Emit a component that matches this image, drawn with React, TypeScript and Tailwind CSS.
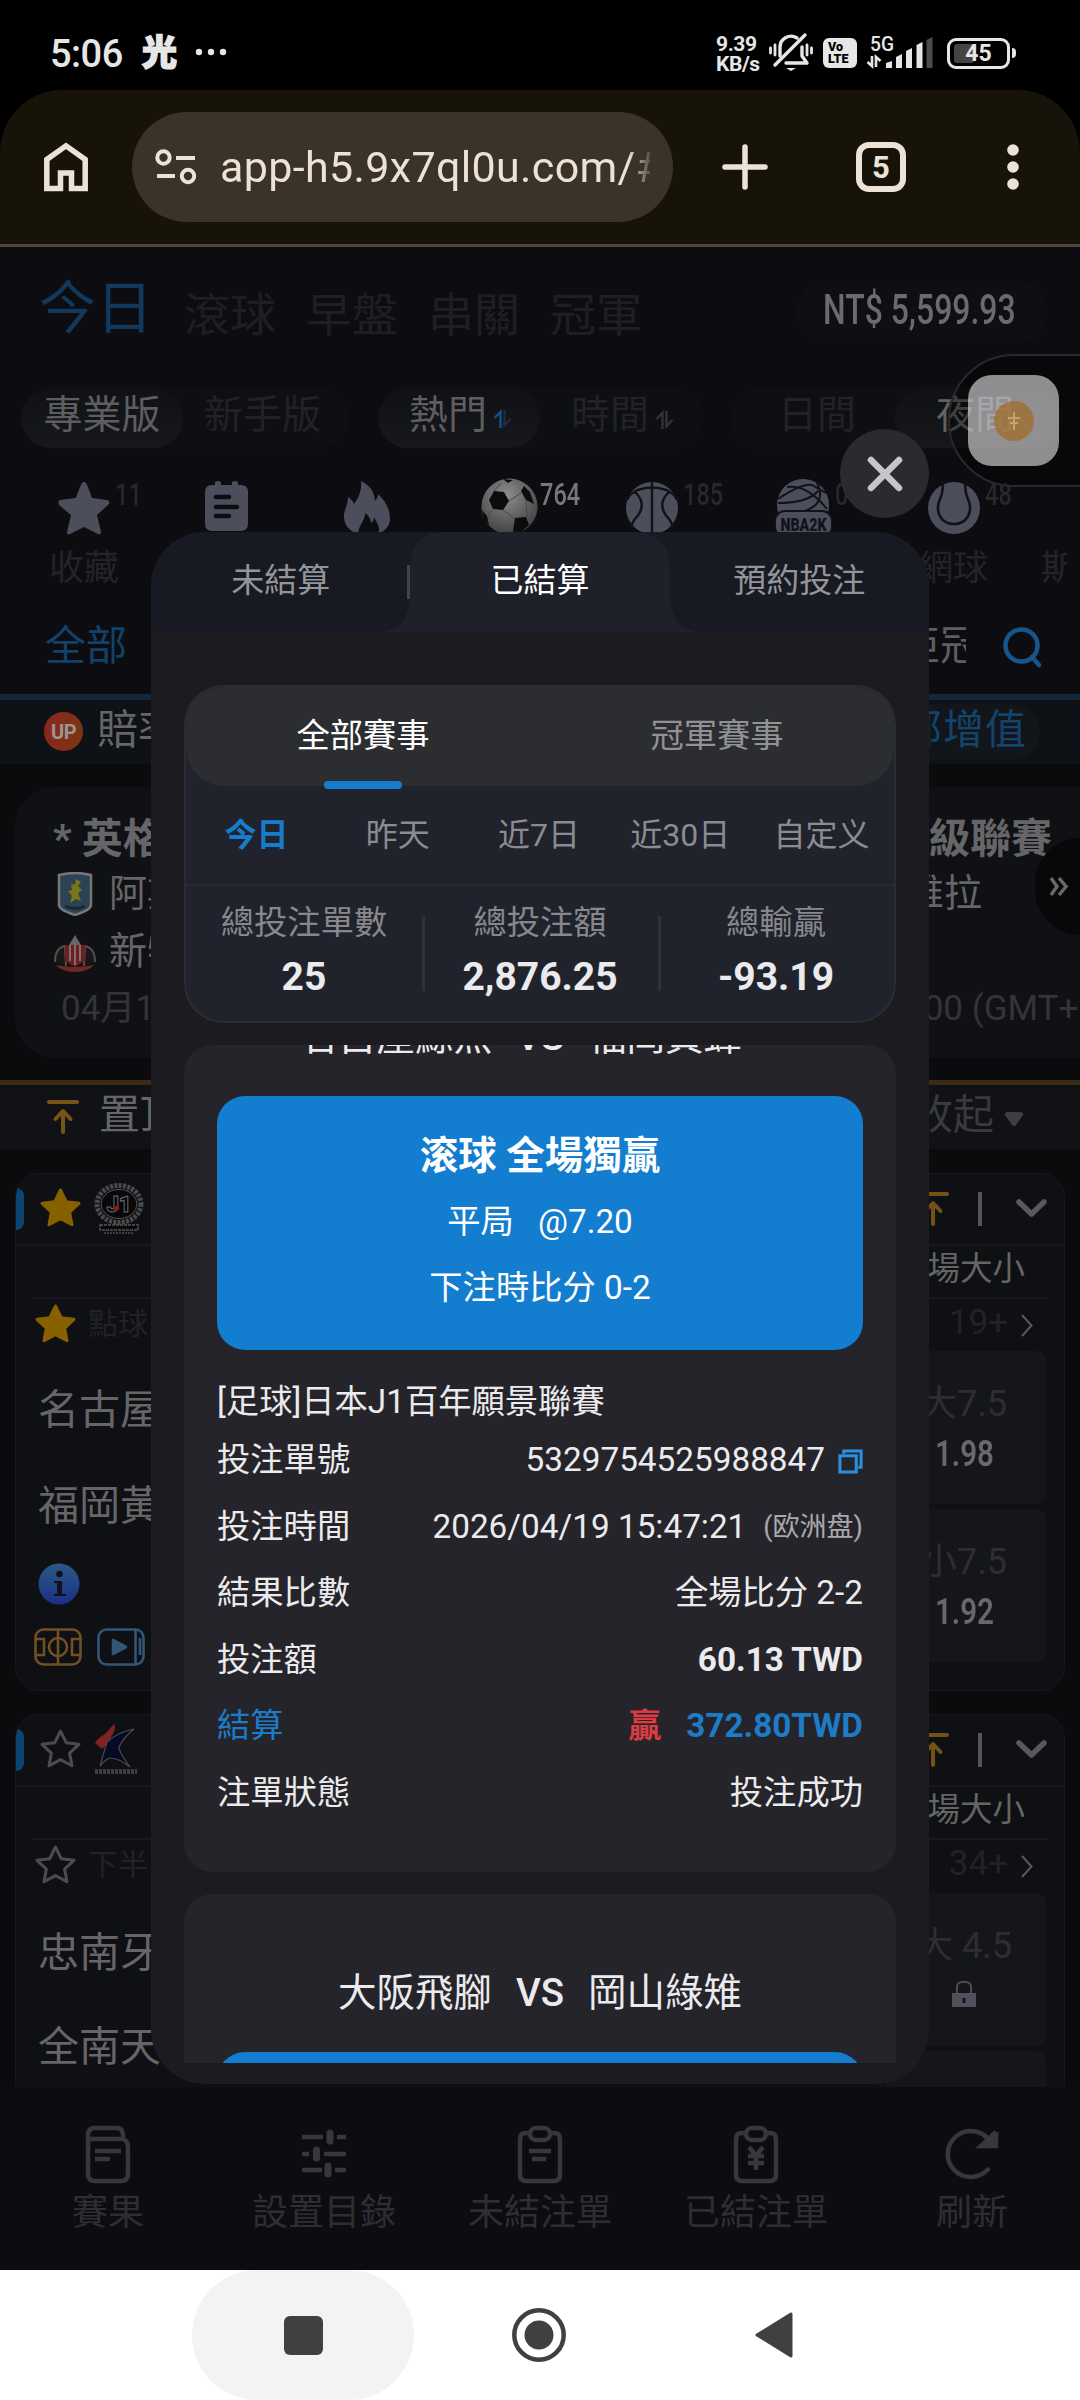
import { ReactNode } from "react";
import clsx from "clsx";

const statusRows = [
  { label: "結果比數", value: "全場比分 2-2" },
  { label: "投注額", value: "60.13 TWD", bold: true },
];

const dateTabs = ["今日", "昨天", "近7日", "近30日", "自定义"];

const totals = [
  { label: "總投注單數", value: "25" },
  { label: "總投注額", value: "2,876.25" },
  { label: "總輸贏", value: "-93.19" },
];

// condensed numerals used for money, odds and counters
function Narrow({ children, className }: { children: ReactNode; className?: string }) {
  return <span className={clsx("inline-block origin-left scale-x-[0.76] whitespace-nowrap", className)}>{children}</span>;
}

function StatusBar() {
  return (
    <div className="flex h-[90px] items-center bg-black pt-[18px] pl-[50px] text-[#e6e6e6]">
      <span className="w-[92px] text-[38px] leading-none font-medium tracking-[-0.5px]">5:06</span>
      <span className="w-[53px] pb-[2px] text-[35px] leading-none font-black [-webkit-text-stroke:1.5px_#e6e6e6]">光</span>
      <svg className="-mt-1 shrink-0" width="32" height="8" viewBox="0 0 32 8" fill="currentColor">
        <circle cx="4" cy="4" r="3.2" /><circle cx="16" cy="4" r="3.2" /><circle cx="28" cy="4" r="3.2" />
      </svg>
      <div className="ml-[489px] w-[52px] text-[21px] leading-[20px] font-bold tracking-[-0.4px]">
        <div>9.39</div>
        <div>KB/s</div>
      </div>
      <svg className="-mt-1 shrink-0" width="46" height="40" viewBox="0 0 46 40" fill="none" stroke="currentColor" strokeWidth="3.4" strokeLinecap="round">
        <path d="M12 24V15a11 11 0 0 1 17-9M34 15v9l5 7H18" strokeLinejoin="round" />
        <path d="M37 3 7 33" />
        <path d="M18 36h10l-5 3z" fill="currentColor" stroke="none" />
        <path d="M7 13v10M2.5 16v5M39 13v10M43.5 16v5" strokeWidth="2.8" />
      </svg>
      <div className="-mt-0.5 ml-[9px] h-[30px] w-[34px] rounded-[6px] bg-[#e6e6e6] pt-[3px] pl-[5px] text-[12.5px] leading-[12px] font-black text-black">
        <div>Vo</div>
        <div>LTE</div>
      </div>
      <svg className="-mt-1 ml-[9px] shrink-0" width="68" height="36" viewBox="0 0 68 36">
        <text x="4" y="17" fontSize="20" fontWeight="500" fill="#e6e6e6" textLength="24" lengthAdjust="spacingAndGlyphs">5G</text>
        <path d="M6 22v10l-4.5-4M10 33V23l4.5 4" fill="none" stroke="#e6e6e6" strokeWidth="2.6" />
        <g fill="#e6e6e6">
          <path d="M20 29l6-2v7h-6z" /><path d="M30 23l6-3v14h-6z" /><path d="M40 17l6-3v20h-6z" /><path d="M50.5 11l6-3v26h-6z" />
        </g>
        <path d="M60.5 6l6-3v31h-6z" fill="#4b4b4b" />
      </svg>
      <div className="-mt-0.5 ml-[13px] flex items-center">
        <div className="relative flex h-[31px] w-[63px] items-center justify-center rounded-[9px] border-[3px] border-[#e6e6e6]">
          <div className="absolute top-[3px] left-[4px] h-[19px] w-[20px] rounded-[3px] bg-[#444]" />
          <span className="relative text-[23px] leading-none font-bold">45</span>
        </div>
        <div className="ml-[2px] h-[10px] w-[4px] rounded-r bg-[#e6e6e6]" />
      </div>
    </div>
  );
}

function BrowserBar() {
  return (
    <div className="h-[157px] bg-black">
      <div className="flex h-[157px] items-center rounded-t-[62px] border-b-[3px] border-[#4b4740] bg-[#171309] text-[#ece3d6]">
        <svg className="ml-[44px] shrink-0" width="44" height="50" viewBox="0 0 44 50" fill="none" stroke="currentColor" strokeWidth="5.5">
          <path d="M2.8 46.5V17.5L22 3.8l19.2 13.7v29H27.5V31h-11v15.5z" />
        </svg>
        <div className="ml-[44px] flex h-[110px] w-[541px] items-center rounded-full bg-[#3b3328] pl-[23px]">
          <svg className="shrink-0" width="42" height="36" viewBox="0 0 42 36" fill="none" stroke="currentColor" strokeWidth="4">
            <circle cx="8.5" cy="8.5" r="6.2" /><path d="M21 9h19M2 27h18" /><circle cx="33" cy="27" r="6.2" />
          </svg>
          <div className="ml-[23px] w-[430px] overflow-hidden text-[43px] leading-[58px] tracking-[0.35px] whitespace-nowrap [mask-image:linear-gradient(to_right,black_95%,transparent_101%)]">app-h5.9x7ql0u.com/#</div>
        </div>
        <svg className="ml-[49px] shrink-0" width="46" height="46" viewBox="0 0 46 46" stroke="currentColor" strokeWidth="5.5" strokeLinecap="round">
          <path d="M23 3v40M3 23h40" />
        </svg>
        <div className="ml-[88px] flex h-[50px] w-[50px] items-center justify-center rounded-[13px] border-[6px] text-[31px] leading-none font-bold">5</div>
        <svg className="ml-[101px] shrink-0" width="12" height="48" viewBox="0 0 12 48" fill="currentColor">
          <circle cx="6" cy="7" r="5.8" /><circle cx="6" cy="24" r="5.8" /><circle cx="6" cy="41" r="5.8" />
        </svg>
      </div>
    </div>
  );
}

function SortArrows({ up, down }: { up: string; down: string }) {
  return (
    <svg width="19" height="20" viewBox="0 0 19 20" fill="none" strokeWidth="2.4">
      <path d="M7.5 19V3L1.5 9" stroke={up} />
      <path d="M11.5 1v15l6-6" stroke={down} />
    </svg>
  );
}

function Star({ filled }: { filled?: boolean }) {
  return (
    <svg className="shrink-0" width="43" height="41" viewBox="0 0 43 41">
      <path
        d="M21.500 3l5.700 11.700 12.800 1.600-9.400 8.800 2.400 12.700-11.500-6.200-11.500 6.200 2.400-12.700-9.400-8.800 12.800-1.600z"
        fill={filled ? "#876100" : "none"}
        stroke={filled ? "#876100" : "#4c4c4f"}
        strokeWidth="3"
        strokeLinejoin="round"
      />
    </svg>
  );
}

function SportIcons() {
  return (
    <div className="flex h-[57px] items-start pt-[2px] pl-[58px] text-[31px] leading-[28px] font-medium text-[#28282c]">
      <div className="flex w-[147px] shrink-0">
        <svg width="52" height="54" viewBox="0 0 52 54" fill="#4c4e5b">
          <path d="M26 1c2 0 3 2 8 16l15 2c3 1 3 3 1 5L39 34l4 17c0 2-1 3-3 2l-14-7-14 7c-2 1-3 0-3-2l4-17L1 24c-1-2-1-4 1-5l16-2C23 3 24 1 26 1z" />
        </svg>
        <Narrow className="ml-[5px]">11</Narrow>
      </div>
      <div className="w-[139px] shrink-0">
        <svg width="43" height="50" viewBox="0 0 43 50">
          <path d="M7 4h3V2q0-2 3-2t3 2v2h11V2q0-2 3-2t3 2v2h3q7 0 7 7v31q0 8-7 8H7q-7 0-7-8V11q0-7 7-7z" fill="#4c4e5b" />
          <path d="M11 16h13M11 26h21M11 35h13" stroke="#0d0d11" strokeWidth="4.5" strokeLinecap="round" />
        </svg>
      </div>
      <div className="w-[137px] shrink-0">
        <svg width="47" height="54" viewBox="0 0 47 54" fill="#4c4e5b">
          <path d="M17 0c9 4 14 12 14 20 2-2 3-5 3-7 8 7 12 16 12 25 0 7-5 12-12 15 3-6-1-11-4-17 0 3-1 5-3 6 0-5-4-9-6-10 1 6-6 11-7 21C5 50 0 44 0 35c0-7 4-10 4-19 3 2 5 4 6 7 5-7 8-14 7-23z" />
        </svg>
      </div>
      <div className="flex w-[145px] shrink-0 text-[#78787a]">
        <svg className="-mt-[3px]" width="57" height="57" viewBox="0 0 57 57">
          <defs>
            <radialGradient id="ball" cx="0.45" cy="0.3" r="0.75">
              <stop offset="0" stopColor="#8d8d8d" /><stop offset="1" stopColor="#3c3c3c" />
            </radialGradient>
          </defs>
          <circle cx="28.5" cy="28.5" r="28" fill="url(#ball)" />
          <path d="M13 13l10 1 5 9-6 9-10-1-4-9zM43 8l6 6 4 12-8-4-5-9zM34 40l11-1 3 8-8 7h-8zM1 32l5 6 2 9-5-6zM22 1l10 1-5 3z" fill="#0c0c0d" />
          <path d="M28 23l12-8M22 32l12 9M45 22l1 17M12 31l-5 6M13 13l7-8" stroke="#474747" strokeWidth="1" />
        </svg>
        <Narrow className="ml-[2px]">764</Narrow>
      </div>
      <div className="flex w-[149px] shrink-0">
        <svg width="52" height="54" viewBox="0 0 52 54">
          <circle cx="26" cy="27" r="26" fill="#4c4e5b" />
          <path d="M26 0v54M7 11q19-9 38 0M1 19q4-9 9-7 12 12-1 26Q4 45 7 46M51 19q-4-9-9-7-12 12 1 26 5 7 2 8" stroke="#11121a" strokeWidth="2.4" fill="none" />
        </svg>
        <Narrow className="ml-[5px]">185</Narrow>
      </div>
      <div className="flex w-[153px] shrink-0">
        <svg className="-mt-[3px]" width="57" height="57" viewBox="0 0 57 57">
          <circle cx="28" cy="27" r="26" fill="#4c4e5b" />
          <path d="M3 21q24-16 34-14l14 8M3 25q30 0 40-12M12 9q20-3 40 22M42 5q10 20-12 28" stroke="#11121a" strokeWidth="2" fill="none" />
          <rect x="0" y="33" width="57" height="26" rx="10" fill="#4c4e5b" stroke="#11121a" strokeWidth="2" />
          <text x="28.5" y="53" textAnchor="middle" fontSize="18" fontWeight="900" fill="#11121a" textLength="46" lengthAdjust="spacingAndGlyphs">NBA2K</text>
        </svg>
        <Narrow className="ml-[3px]">0</Narrow>
      </div>
      <div className="flex shrink-0">
        <svg width="52" height="54" viewBox="0 0 52 54">
          <circle cx="26" cy="27" r="26" fill="#4c4e5b" />
          <path d="M15 0q0 12-3 18c-6 14 2 25 14 25s20-11 14-25q-3-6-3-18" stroke="#11121a" strokeWidth="2.6" fill="none" />
        </svg>
        <Narrow className="ml-[5px]">48</Narrow>
      </div>
    </div>
  );
}

function TopArrow({ color }: { color: string }) {
  return (
    <svg className="shrink-0" width="32" height="36" viewBox="0 0 32 36" fill="none" stroke={color} strokeWidth="4" strokeLinecap="round" strokeLinejoin="round">
      <path d="M2 3h28M16 33V13M8.5 20l7.5-8 7.5 8" />
    </svg>
  );
}

function J1Logo() {
  return (
    <svg width="50" height="52" viewBox="0 0 50 52">
      <ellipse cx="25" cy="21" rx="22" ry="18.5" fill="none" stroke="#4a4a4c" strokeWidth="5" strokeDasharray="3 1.3" />
      <ellipse cx="25" cy="21" rx="18" ry="14.5" fill="#08080a" stroke="#555" strokeWidth="1" />
      <text x="25" y="29" textAnchor="middle" fontSize="22" fontWeight="900" fill="#050505" stroke="#6a6a6c" strokeWidth="1">J1</text>
      <path d="M19 24l6-2v5l-5 1z" fill="#7c1f1f" />
      <path d="M6 42h38v5H6z" fill="#0a0a0a" stroke="#555" strokeWidth="1.5" strokeDasharray="3 1" />
      <path d="M10 50h30" stroke="#3c3c3e" strokeWidth="2" strokeDasharray="2 1" />
    </svg>
  );
}

function KLogo() {
  return (
    <svg width="44" height="52" viewBox="0 0 44 52">
      <path d="M20 0q2 2 0 8l-7 12-5 5-7-6q4-6 10-9z" fill="#7e2222" />
      <path d="M40 5Q24 8 13 18q-3 10-7 24 5-6 9-8 10 0 21 9Q25 28 25 23q4-9 15-18z" fill="#080922" stroke="#4b4b55" strokeWidth="1.2" />
      <path d="M1 47.5h42" stroke="#3f3f42" strokeWidth="5" strokeDasharray="3 1" />
    </svg>
  );
}

function MatchHeader({ filled, logo }: { filled?: boolean; logo: ReactNode }) {
  return (
    <div className="flex h-[72px] items-center border-b-2 border-[#17181c]">
      <div className="h-[42px] w-[8px] rounded-r-[8px] bg-[#0e4470]" />
      <div className="mb-[3px] ml-[15px]"><Star filled={filled} /></div>
      <div className="ml-[12px]">{logo}</div>
      <div className="ml-auto flex items-center">
        <TopArrow color="#765116" />
        <div className="ml-[29px] h-[34px] w-[4px] bg-[#555558]" />
        <svg className="mr-[17px] ml-[34px]" width="31" height="20" viewBox="0 0 31 20" fill="none" stroke="#59595c" strokeWidth="5.500" strokeLinecap="round" strokeLinejoin="round">
          <path d="M3 3l12.500 12L28 3" />
        </svg>
      </div>
    </div>
  );
}

function MatchMeta({ filled, period, more }: { filled?: boolean; period: string; more: string }) {
  return (
    <>
      <div className="flex h-[51px] items-center justify-end pr-[39px] pb-[4px] text-[32.500px] text-[#656568]">場大小</div>
      <div className="mx-4 h-[2px] bg-[#17181c]" />
      <div className="flex h-[52px] items-center pb-[3px] pl-[18px]">
        <Star filled={filled} />
        <span className="ml-[11px] text-[30px] text-[#222226]">{period}</span>
        <span className="ml-auto text-[35px] text-[#222226]">{more}</span>
        <svg className="mt-[4px] mr-[31px] ml-[13px]" width="12" height="23" viewBox="0 0 12 23" fill="none" stroke="#5a5a5d" strokeWidth="2"><path d="M1 1l9.500 10.500L1 22" /></svg>
      </div>
    </>
  );
}

function Page() {
  return (
    <div className="h-[1840px] overflow-hidden bg-[#0b0b0d]">
      <div className="h-[447px] bg-[#0d0d11]">
        <div className="flex h-[125px] items-center pt-[4px] pl-[39px]">
          <span className="-mt-[7px] mr-[31px] text-[57px] leading-none text-[#10395b]">今日</span>
          {["滾球", "早盤", "串關", "冠軍"].map((tab) => (
            <span key={tab} className="mr-[30px] pt-[6px] text-[46px] leading-none text-[#1f1f23]">{tab}</span>
          ))}
          <div className="ml-[124px] flex h-[64px] w-[252px] shrink-0 items-center rounded-full bg-[#0e0f13] pb-[3px] pl-[27px]">
            <Narrow className="text-[42px] leading-none font-medium text-[#6b6b6d]">NT$ 5,599.93</Narrow>
          </div>
        </div>

        <div className="flex h-[92px] items-center pl-[21px] text-[39px] leading-none text-[#222226]">
          <div className="flex h-[62px] w-[328px] shrink-0 items-center rounded-full bg-[#0e0f13]">
            <div className="flex h-[60px] w-[162px] items-center justify-center rounded-full bg-linear-to-b from-[#101115] to-[#16181b] pb-[6px] text-[#5e5e60]">專業版</div>
            <span className="ml-[21px] pb-[6px]">新手版</span>
          </div>
          <div className="ml-[29px] flex h-[62px] w-[326px] shrink-0 items-center rounded-full bg-[#0e0f13]">
            <div className="flex h-[60px] w-[162px] items-center rounded-full bg-linear-to-b from-[#101115] to-[#16181b] pb-[6px] pl-[31px] text-[#5e5e60]">
              熱門<span className="mt-2 ml-[6px]"><SortArrows up="#12528a" down="#1c2c42" /></span>
            </div>
            <span className="ml-[31px] pb-[6px]">時間</span>
            <span className="mt-1 ml-[6px]"><SortArrows up="#333337" down="#333337" /></span>
          </div>
          <div className="ml-[26px] flex h-[62px] w-[334px] shrink-0 items-center rounded-full bg-[#0e0f13] pl-[48px]">
            <span className="pb-[6px]">日間</span>
            <div className="ml-[39px] flex h-[60px] w-[160px] items-center justify-center rounded-full bg-linear-to-b from-[#101115] to-[#16181b] pb-[6px] text-[#626264]">夜間</div>
          </div>
        </div>

        <div className="h-[15px]" />
        <SportIcons />
        <div className="flex h-[66px] items-center pl-[49px] text-[35px] text-[#242428]">
          <span>收藏</span>
          <span className="ml-[799px]">網球</span>
          <span className="ml-[53px] w-[26px] overflow-hidden whitespace-nowrap">斯</span>
        </div>
        <div className="mt-[8px] flex h-[74px] items-center pl-[45px] text-[41px]">
          <span className="text-[#12426a]">全部</span>
          <span className="ml-[772px] w-[67px] overflow-hidden whitespace-nowrap text-[#5e5e60]">亞冠</span>
          <svg className="ml-[37px]" width="39" height="41" viewBox="0 0 39 41" fill="none" stroke="#17568b" strokeWidth="4.500" strokeLinecap="round">
            <circle cx="18.500" cy="18.500" r="16" /><path d="M29 30l7 8" />
          </svg>
        </div>
      </div>

      <div className="h-[6px] bg-[#14263a]" />
      <div className="flex h-[64px] items-center bg-[#0e1115] pl-[44px] text-[41px] text-[#666668]">
        <span className="mt-[-1px] flex h-[39px] w-[39px] items-center justify-center rounded-full bg-linear-to-r from-[#8a261c] to-[#7a3414] text-[20px] leading-none font-bold tracking-tight text-[#9a9494]">UP</span>
        <span className="ml-[14px] pb-[3px]">賠率</span>
        <div className="mr-[40px] ml-auto flex h-[56px] items-center rounded-full bg-[#12161a] pr-[13px] pb-[3px] pl-10 tracking-[1px] text-[#13446b]">全部增值</div>
      </div>

      <div className="mt-[23px] ml-[15px] h-[271px] rounded-l-[40px] bg-[#101114] pt-[26px] pl-[38px] text-[#666668]">
        <div className="flex h-[54px] items-center justify-between pr-[28px] text-[41px] font-bold"><span>* 英格蘭</span><span>超級聯賽</span></div>
        <div className="flex h-[55px] items-center pb-[2px] text-[38px]">
          <svg className="ml-[4px]" width="36" height="44" viewBox="0 0 36 44">
            <path d="M2 3q16-4 32 0v30q0 5-16 10Q2 38 2 33z" fill="#2c4355" stroke="#77777a" strokeWidth="2.5" />
            <path d="M19 7l5 3-3 4 4 4-4 3 3 8-5-2-6 4 2-7-4-5 4-1-1-5 4-1z" fill="#7a7614" />
            <path d="M8 34q10 5 20 0" stroke="#1c2733" strokeWidth="3" fill="none" />
          </svg>
          <span className="ml-[16px]">阿斯</span>
          <span className="mr-[98px] ml-auto">維拉</span>
        </div>
        <div className="flex h-[59px] items-center text-[38px]">
          <svg className="mt-1" width="44" height="40" viewBox="0 0 44 40">
            <path d="M22 1l6 10h-12z" fill="#6a6668" />
            <path d="M2 28q0-14 10-16l1 20M42 28q0-14-10-16l-1 20" fill="#18181a" stroke="#5c4a4a" strokeWidth="2" />
            <path d="M12 11h20v16l-10 6-10-6z" fill="#6e2020" />
            <path d="M17 11v16M22 11v20M27 11v16" stroke="#7a7072" strokeWidth="2" />
            <path d="M3 31q18 4 38 0-6 7-19 7T3 31z" fill="#6e2a2a" />
          </svg>
          <span className="ml-[12px]">新特</span>
        </div>
        <div className="flex h-[56px] items-center pl-[8px] text-[35px] whitespace-nowrap text-[#343437]">
          <span>04月19</span>
          <span className="ml-auto -mr-[18px]">21:00 (GMT+8</span>
        </div>
      </div>

      <div className="mt-[22px] h-[5px] bg-[#3a2a16]" />
      <div className="flex h-[64px] items-center bg-[#101216] pl-[47px] text-[41px] text-[#666668]">
        <TopArrow color="#7a5318" />
        <span className="ml-[20px] pb-[2px]">置頂</span>
        <span className="ml-auto pb-[2px] text-[#3a3a3d]">收起</span>
        <svg className="mt-1 mr-[56px] ml-[10px]" width="20" height="14" viewBox="0 0 20 14" fill="#3f3f42"><path d="M3 0h14q3 1 2 3l-7 10q-2 2-4 0L1 3q-1-2 2-3z" /></svg>
      </div>

      <div className="mx-[15px] mt-[24px] h-[518px] overflow-hidden rounded-[24px] border border-[#17181c] bg-[#0f1014]">
        <MatchHeader filled logo={<J1Logo />} />
        <MatchMeta filled period="點球" more="19+" />
        <div className="flex justify-between pr-[18px] pl-[22px]">
          <div className="pt-[11px] text-[41px] leading-[96px] text-[#666668]">
            <div>名古屋</div>
            <div>福岡黃</div>
            <svg className="mt-[9px]" width="42" height="42" viewBox="0 0 42 42">
              <defs><linearGradient id="info" x2="0" y2="1"><stop offset="0" stopColor="#295a86" /><stop offset="1" stopColor="#1c2f86" /></linearGradient></defs>
              <circle cx="21" cy="21" r="20.500" fill="url(#info)" />
              <circle cx="21.500" cy="11" r="3.300" fill="#10131c" />
              <path d="M16 18h8v13h4v2H16v-2h3V20h-3z" fill="#10131c" />
            </svg>
            <div className="-ml-[4px] flex pt-[23px]">
              <svg width="48" height="38" viewBox="0 0 48 38" fill="none" stroke="#705024" strokeWidth="2.600">
                <rect x="1.500" y="1.500" width="45" height="35" rx="8" /><path d="M24 1v36M2 11h8v16H2M46 11h-8v16h8" /><circle cx="24" cy="19" r="9" />
              </svg>
              <svg className="ml-[15px]" width="48" height="38" viewBox="0 0 48 38" fill="none" stroke="#315678" strokeWidth="2.600">
                <rect x="1.500" y="1.500" width="45" height="35" rx="8" /><path d="M38.500 1v36M43 10v17" /><path d="M16 12l13 7-13 7z" fill="#315678" strokeLinejoin="round" />
              </svg>
            </div>
          </div>
          <div className="w-[160px] text-[#2e2e32]">
            {[["大7.5", "1.98"], ["小7.5", "1.92"]].map(([line, odd]) => (
              <div key={line} className="mb-[5px] h-[153px] rounded-[9px] bg-[#15161a] pt-[28px] pr-[39px] text-right text-[36px] leading-[50px]">
                <div>{line}</div>
                <div className="pl-[49px] text-left"><Narrow className="scale-x-[0.82] font-semibold text-[#69696b]">{odd}</Narrow></div>
              </div>
            ))}
          </div>
        </div>
      </div>

      <div className="mx-[15px] mt-[23px] h-[374px] overflow-hidden rounded-t-[24px] border border-b-0 border-[#17181c] bg-[#0f1014]">
        <MatchHeader logo={<KLogo />} />
        <MatchMeta period="下半" more="34+" />
        <div className="flex justify-between pr-[18px] pl-[22px]">
          <div className="pt-[14px] text-[41px] leading-[94px] text-[#666668]">
            <div>忠南牙</div>
            <div>全南天</div>
          </div>
          <div className="w-[160px] pt-[1px] text-[#2e2e32]">
            <div className="mb-[5px] h-[153px] rounded-[9px] bg-[#15161a] pt-[28px] pr-[34px] text-right text-[36px] leading-[50px]">
              <div>大 4.5</div>
              <svg className="mt-[10px] ml-auto mr-[36px]" width="24" height="26" viewBox="0 0 24 26">
                <path d="M5 13V6q0-5 5-5h4q5 0 5 5v7" fill="none" stroke="#4b4b50" strokeWidth="2" />
                <path d="M0 12h24v14H0z" fill="#50515b" /><path d="M12 17v5" stroke="#15161a" strokeWidth="3" />
              </svg>
            </div>
            <div className="h-[153px] rounded-[9px] bg-[#15161a]" />
          </div>
        </div>
      </div>
    </div>
  );
}

function Clipboard({ children }: { children: ReactNode }) {
  return (
    <>
      <path d="M12 7H8q-6 0-6 6v36q0 6 6 6h28q6 0 6-6V13q0-6-6-6h-4" />
      <rect x="12" y="2" width="20" height="12" rx="6" />
      {children}
    </>
  );
}

const bottomItems = [
  { label: "賽果", icon: <><path d="M2 14V9q0-7 7-7h22q5 0 6 6v5M2 13h34q6 1 6 8v27q0 7-7 7H9q-7 0-7-7z" /><path d="M9 25h26M9 33h15" /></> },
  { label: "設置目錄", icon: <><path d="M0 11h21M35 11h9M0 28h7M22 28h22M0 44h20M33 44h11" /><path d="M28 7v8M14.500 24v8M26 40v8" strokeWidth="7" strokeLinecap="round" /></> },
  { label: "未結注單", icon: <Clipboard><path d="M11 25h22M14 33h14" /></Clipboard> },
  { label: "已結注單", icon: <Clipboard><path d="M15 21l7 9 7-9M14 30h16M14 37h16M22 30v14" /></Clipboard> },
  { label: "刷新", icon: <><path d="M39 42a23 23 0 1 1 2-25" /><path d="M46 6v14H31l15-14" fill="#38383b" /></> },
];

function BottomBar() {
  return (
    <div className="grid h-[183px] grid-cols-5 bg-[#0d0d11] pt-[39px] text-[#2e2e31]">
      {bottomItems.map((item) => (
        <div key={item.label} className="flex flex-col items-center">
          <svg className="overflow-visible" width="44" height="57" viewBox="0 0 44 57" fill="none" stroke="#38383b" strokeWidth="4.500">{item.icon}</svg>
          <span className="mt-[3px] text-[36px] leading-[54px]">{item.label}</span>
        </div>
      ))}
    </div>
  );
}

function SystemNav() {
  return (
    <div className="flex h-[130px] items-center bg-white pl-[192px]">
      <div className="flex h-[130px] w-[222px] items-center justify-center rounded-full bg-[#f3f3f3]">
        <div className="h-[39px] w-[39px] rounded-[6px] bg-[#404040]" />
      </div>
      <svg className="ml-[98px]" width="54" height="54" viewBox="0 0 54 54"><circle cx="27" cy="27" r="24.700" fill="none" stroke="#404040" strokeWidth="4.500" /><circle cx="27" cy="27" r="14.500" fill="#404040" /></svg>
      <svg className="ml-[189px]" width="38" height="46" viewBox="0 0 38 46"><path d="M36 2v42L2 23z" fill="#404040" stroke="#404040" strokeWidth="3" strokeLinejoin="round" /></svg>
    </div>
  );
}

function Row({ label, children, className }: { label: string; children: ReactNode; className?: string }) {
  return (
    <div className={clsx("flex h-[66.5px] items-center justify-between", className)}>
      <span>{label}</span>
      <span className="flex items-center">{children}</span>
    </div>
  );
}

function Versus({ home, away }: { home: string; away: string }) {
  return (
    <div className="flex h-[158px] items-center gap-[24px] pt-[40px] text-[38.5px]">
      <span className="flex-1 text-right">{home}</span>
      <span className="font-medium">VS</span>
      <span className="flex-1">{away}</span>
    </div>
  );
}

function BetModal() {
  return (
    <div className="absolute top-[532px] left-[151px] h-[1552px] w-[778px] overflow-hidden rounded-[54px] bg-[#1c1b20] text-[#ebebed]">
      <div className="relative grid h-[100px] grid-cols-3 bg-[#171a22]">
        <svg className="absolute top-0 left-[231px]" width="316" height="100" viewBox="0 0 316 100">
          <path d="M0 100Q28 96 28 62V38Q28 0 62 0H252Q288 0 288 38V62Q288 96 316 100z" fill="#1e202a" />
        </svg>
        <div className="absolute top-[33px] left-[256px] h-[34px] w-[3px] bg-[#42444b]" />
        {["未結算", "已結算", "預約投注"].map((tab, i) => (
          <div key={tab} className={clsx("relative flex items-center justify-center pb-[2px] text-[33px]", i === 1 ? "text-white" : "text-[#949599]")}>{tab}</div>
        ))}
      </div>

      <div className="mx-[33px] mt-[53px] h-[338px] overflow-hidden rounded-[40px] border-2 border-[#2a2d32] bg-[#20232b]">
        <div className="relative grid h-[99px] grid-cols-2 rounded-[38px] bg-[#2c2d31] pb-[2px] text-[33.3px]">
          <span className="flex items-center justify-center text-white">全部賽事</span>
          <span className="flex items-center justify-center text-[#919295]">冠軍賽事</span>
        </div>
        <div className="relative -mt-[5px] ml-[138px] h-[8px] w-[78px] rounded-full bg-[#167dcc]" />
        <div className="grid h-[97px] grid-cols-5 border-b-2 border-[#282b32] pr-[2px] pb-[4px] text-[32px] text-[#8b8c91]">
          {dateTabs.map((tab, i) => (
            <span key={tab} className={clsx("flex items-center justify-center", i === 0 && "font-bold text-[#167dcc]")}>{tab}</span>
          ))}
        </div>
        <div className="grid grid-cols-3 pt-[11px]">
          {totals.map((item, i) => (
            <div key={item.label} className="relative text-center">
              <div className="text-[33.3px] leading-[52px] text-[#87888d]">{item.label}</div>
              <div className="text-[39px] leading-[56px] font-bold">{item.value}</div>
              {i > 0 && <div className="absolute top-[19px] left-0 h-[75px] w-[3px] bg-[#303238]" />}
            </div>
          ))}
        </div>
      </div>

      <div className="mx-[33px] mt-[22px] h-[1018px] overflow-hidden rounded-t-[28px]">
        <div className="-mt-[107px] h-[934px] rounded-[28px] bg-[#25242a] px-[33px]">
          <Versus home="名古屋鯨魚" away="福岡黃蜂" />
          <div className="h-[254px] rounded-[28px] bg-[#137dcf] pt-[27px] text-center text-[33.3px] leading-[66px] text-white">
            <div className="text-[38.5px] font-bold">滚球 全場獨贏</div>
            <div>平局 <span className="ml-[16px]">@7.20</span></div>
            <div>下注時比分 0-2</div>
          </div>
          <div className="pt-[26px] text-[33.3px]">
            <div className="flex h-[51px] items-center">[足球]日本J1百年願景聯賽</div>
            <Row label="投注單號">
              5329754525988847
              <svg className="mt-[2px] ml-[13px]" width="25" height="25" viewBox="0 0 26 26" fill="none" stroke="#2b8fe0" strokeWidth="3.200">
                <path d="M2 7h17v17H2zM6 5V2h18v17h-3" />
              </svg>
            </Row>
            <Row label="投注時間">
              2026/04/19 15:47:21 <span className="ml-[17px] text-[27px] text-[#a9a9ad]">(欧洲盘)</span>
            </Row>
            {statusRows.map((row) => (
              <Row key={row.label} label={row.label}><span className={clsx(row.bold && "font-bold")}>{row.value}</span></Row>
            ))}
            <Row label="結算" className="text-[#1d7cc8]">
              <span className="mr-[25px] font-bold text-[#dc3b40]">贏</span>
              <span className="font-bold">372.80TWD</span>
            </Row>
            <Row label="注單狀態">投注成功</Row>
          </div>
        </div>
        <div className="mt-[22px] h-[934px] rounded-[28px] bg-[#25242a] px-[33px]">
          <Versus home="大阪飛腳" away="岡山綠雉" />
          <div className="h-[254px] rounded-[28px] bg-[#137dcf]" />
        </div>
      </div>
    </div>
  );
}

export default function App() {
  return (
    <div className="relative h-[2400px] w-[1080px] overflow-hidden bg-[#0d0d11] font-['Roboto','Noto_Sans_CJK_SC',sans-serif]">
      <StatusBar />
      <BrowserBar />
      <Page />
      <BottomBar />
      <SystemNav />

      {/* carousel arrow on the right edge */}
      <div className="absolute top-[838px] left-[1035px] flex h-[97px] w-[45px] items-center rounded-l-full bg-[#08080a] pl-[14px]">
        <svg width="20" height="21" viewBox="0 0 20 21" fill="none" stroke="#68686a" strokeWidth="3.5"><path d="M2 2l6 8.500L2 19M10 2l7 8.500-7 8.500" /></svg>
      </div>

      {/* floating widget */}
      <div className="absolute top-[354px] left-[948px] h-[133px] w-[140px] rounded-l-[66px] border-2 border-[#29292b] bg-black/35">
        <div className="mt-[19px] ml-[18px] flex h-[91px] w-[91px] items-center justify-center rounded-[24px] bg-[#fffcfd]/55">
          <div className="flex h-[40px] w-[40px] items-center justify-center rounded-full bg-[#a06c28]/75">
            <svg width="14" height="18" viewBox="0 0 14 18" fill="none" stroke="#c2a276" strokeWidth="2"><path d="M1 6h12M7 0v18M3 11h8" /></svg>
          </div>
        </div>
      </div>

      <BetModal />

      <div className="absolute top-[429px] left-[840px] flex h-[89px] w-[89px] items-center justify-center rounded-full bg-[#2b2b2f]">
        <svg width="38" height="38" viewBox="0 0 38 38" stroke="#c6c6c8" strokeWidth="6.5" strokeLinecap="round"><path d="M5 5l28 28M33 5L5 33" /></svg>
      </div>
    </div>
  );
}
